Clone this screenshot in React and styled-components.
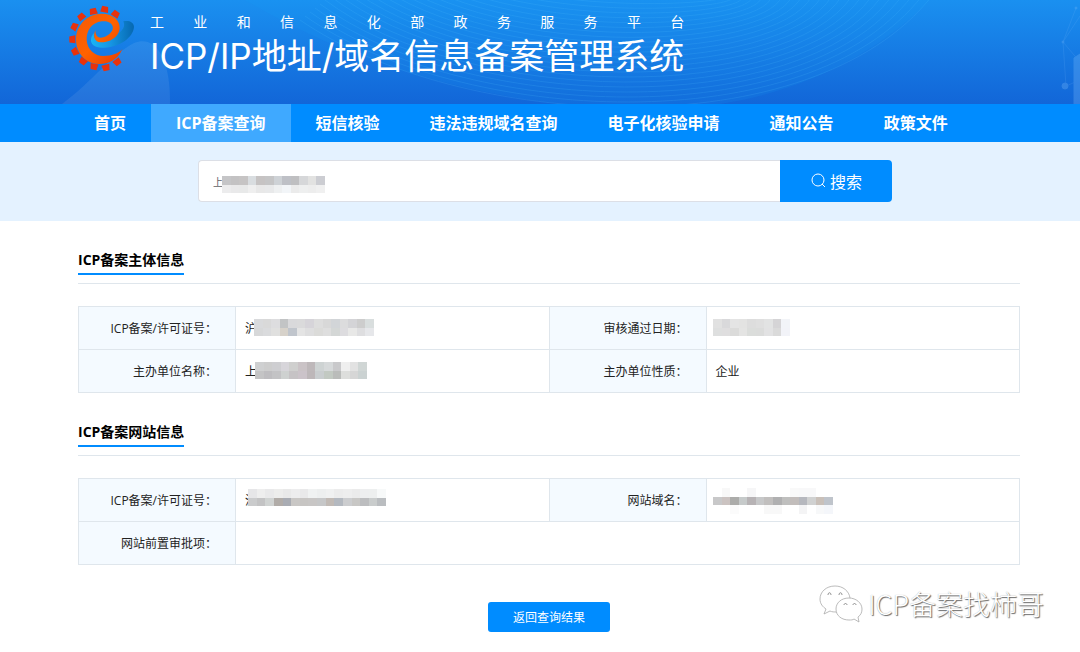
import React, { useState } from "react"
import styled, { createGlobalStyle } from "styled-components"

const GlobalStyle = createGlobalStyle`
    * {
        box-sizing: border-box;
    }

    body {
        margin: 0;
        background-color: #fff;
        color: #222;
        font-family: "Open Sans", "Noto Sans CJK SC", sans-serif;
        font-size: 12px;
    }

    button, input {
        font-family: inherit;
    }
`
const Page = styled.div`
    position: relative;
    padding-bottom: 20px;
`
const Header = styled.header`
    position: relative;
    display: flex;
    height: 104px;
    padding: 4px 68px;
    gap: 14px;
    overflow: hidden;
    color: #fff;
    background-image: linear-gradient(#1a90f0, #1266d8);
`
const HeaderArt = styled.svg`
    position: absolute;
    top: 0;
    right: 0;
    width: 1080px;
    height: 104px;
`
const LogoIcon = styled.svg`
    position: relative;
    flex: none;
    width: 68px;
    height: 68px;
`
const Brand = styled.div`
    position: relative;
    padding-top: 8px;
`
const Platform = styled.div`
    display: flex;
    justify-content: space-between;
    font-size: 14px;
    line-height: 20px;
`
const SystemName = styled.h1`
    margin: 0;
    font-family: Inter, "Noto Sans CJK SC", sans-serif;
    font-size: 35px;
    font-weight: 400;
    line-height: 48px;
    white-space: nowrap;
`
const Nav = styled.nav`
    display: flex;
    height: 38px;
    padding-left: 69px;
    background-color: #008cff;
`
const NavLink = styled.a`
    padding: 0 25px;
    color: #fff;
    font-size: 16px;
    font-weight: 700;
    line-height: 38px;
    white-space: nowrap;
    text-decoration: none;
    background-color: ${props => (props.$active ? "#3fa9ff" : "transparent")};
`
const SearchBar = styled.form`
    display: flex;
    padding: 18px 188px 19px 198px;
    background-color: #e4f2ff;
`
const SearchField = styled.div`
    position: relative;
    flex: 1;
`
const SearchInput = styled.input`
    width: 100%;
    height: 42px;
    padding: 0 14px;
    border: 1px solid #dcdfe6;
    border-right: none;
    border-radius: 4px 0 0 4px;
    color: #606266;
    font-size: 10px;
    outline: none;
`
const SearchButton = styled.button`
    display: flex;
    align-items: center;
    justify-content: center;
    gap: 4px;
    width: 112px;
    height: 42px;
    border: none;
    border-radius: 0 4px 4px 0;
    color: #fff;
    font-size: 16px;
    background-color: #008cff;
`
const Main = styled.main`
    display: flex;
    flex-direction: column;
    padding: 28px 60px 0 78px;
`
const Section = styled.section`
    margin-bottom: 28px;
`
const SectionHead = styled.div`
    display: flex;
    padding-bottom: 8px;
    margin-bottom: 22px;
    border-bottom: 1px solid #dfe6ec;
`
const SectionTitle = styled.h2`
    margin: 0;
    padding-bottom: 2px;
    border-bottom: 2px solid #008cff;
    color: #000;
    font-size: 14px;
    font-weight: 700;
    line-height: 22px;
`
const InfoTable = styled.table`
    width: 100%;
    table-layout: fixed;
    border-collapse: collapse;
`
const Label = styled.th`
    width: 157px;
    height: 43px;
    padding: 0 18px 0 0;
    border: 1px solid #dfe6ec;
    font-weight: 400;
    text-align: right;
    background-color: #f4faff;
`
const Value = styled.td`
    position: relative;
    padding: 0 9px;
    border: 1px solid #dfe6ec;
`
const Mask = styled.svg`
    position: absolute;
    top: ${props => props.$top}px;
    left: ${props => props.$left}px;
`
const BackButton = styled.button`
    align-self: center;
    width: 122px;
    height: 30px;
    margin-top: 9px;
    border: none;
    border-radius: 3px;
    color: #fff;
    font-size: 12px;
    background-color: #008cff;
`
const Watermark = styled.div`
    position: absolute;
    right: 36px;
    bottom: 28px;
    display: flex;
    align-items: center;
    gap: 5px;
    color: #fff;
    font-family: "Noto Sans CJK SC", sans-serif;
    font-size: 27px;
    font-weight: 300;
    line-height: 40px;
    text-shadow: 1px 1px 1px #666, 0 0 1px #aaa;
`

const platform = "工业和信息化部政务服务平台"

const links = ["首页", "ICP备案查询", "短信核验", "违法违规域名查询", "电子化核验申请", "通知公告", "政策文件"]

const masks = {
    search: [
        ["#c5c5c7", "#c3c2c3", "#c6c4c4", "#d9dde0", "#c6c3c3", "#c5c5c6", "#ced2d6", "#bec0c6", "#bfbfc1", "#d6d7d9", "#e2e2e1", "#cccdd2"],
        ["#ececed", "#e9e9ea", "#e8e9e9", "#efefef", "#e8e8e8", "#e8e9ea", "#eef0f1", "#f2f5f8", "#ebebeb", "#eeefef", "#ededed", "#f0f0f0"]
    ],
    license: [
        ["#d9dadc", "#d9d9d9", "#dddddf", "#c2c4c5", "#d9d9db", "#dadadb", "#d6d4d9", "#dddddd", "#d8d8d8", "#d2d5d8", "#dcdcdd", "#d4d4d7", "#cdcdcd", "#d9dede"],
        ["#d7d8d9", "#dadbdd", "#e0e0df", "#d7d2ca", "#c0c5cc", "#e4e4e4", "#dededf", "#dbdbd9", "#dedede", "#d4d7d6", "#dddcdf", "#e8e8e7", "#dedee0", "#e6e7ea"]
    ],
    owner: [
        ["#cfd0d1", "#cdcdcd", "#ceced1", "#d7d5da", "#cfcfce", "#cac3c6", "#beb8ba", "#ced3d3", "#d6d9da", "#c9c9cb", "#efefef", "#e2e2e2", "#d0d6d5"],
        ["#c4c4c5", "#bebdc0", "#c3c3c5", "#ced1d0", "#c6c3c5", "#cbc3c9", "#bdb7b9", "#c9cdcf", "#c2c9c2", "#babcba", "#dddedc", "#d6d6d6", "#cbd2d2"]
    ],
    date: [
        ["#e1e1e1", "#d9d9db", "#e4e4e4", "#e3e3e2", "#dddddd", "#dfdfdf", "#e2e3e3", "#d5d4d6", "#f2f4f8"],
        ["#dedfdf", "#dfdedf", "#dbdbda", "#e4e4e3", "#dbdddb", "#dbdcdb", "#e2e2e3", "#dadada", "#f2f3f8"]
    ],
    site: [
        ["#e6e6e8", "#eeeeee", "#e9e9ea", "#ededec", "#e9e9e9", "#ededee", "#e9e9ea", "#f0f2f2", "#edefef", "#f0f1f1", "#ececec", "#eeeeee", "#ebebeb", "#edeeef", "#edefef", "#f7f9f9"],
        ["#cacbcc", "#c3c3c4", "#d0d3d2", "#b1aca8", "#a9acb3", "#c9c7c5", "#c7c5c3", "#c8c6c5", "#c6c7c8", "#c1bab5", "#b4b9c0", "#cccdcf", "#c8c7c5", "#bcbdbf", "#c9cccc", "#babdc0"]
    ],
    domain: [
        ["#fff", "#f8f8f8", "#fff", "#fff", "#f6f6f7", "#fff", "#fff", "#fff", "#fff", "#f9f9f9", "#f8f8f9", "#f8f8f9", "#fff", "#fff"],
        ["#c8c8c9", "#cbc3c1", "#acacaa", "#c6caca", "#b7b3b5", "#c7c8c9", "#c1bfbe", "#b0b0b1", "#bfbfbe", "#c2bdbb", "#b6b8be", "#d0d1d1", "#c9c0b9", "#bfc4cb"],
        ["#fff", "#fff", "#fbfbfb", "#fff", "#fff", "#fff", "#f8f8f8", "#f8f8f8", "#fff", "#fff", "#f4f4f5", "#fff", "#f7f8f9", "#f4f6fa"]
    ]
}

const teeth = [[167, 42], [134, 28], [100, 34], [64, 50], [43, 80], [37, 118], [45, 155], [69, 184], [102, 200], [138, 203], [172, 186]]

const toothAngle = ([x, y]) => (Math.atan2(y - 116, x - 118) * 180) / Math.PI + 90

const Logo = () => (
    <LogoIcon viewBox="24 12 204 204" aria-hidden="true">
        <defs>
            <linearGradient id="swoosh" x1="0" x2="1">
                <stop offset="0" stopColor="#19b4f5" />
                <stop offset="0.45" stopColor="#1696e4" />
                <stop offset="1" stopColor="#0668b0" />
            </linearGradient>
            <linearGradient id="flame" x1="0" y1="0" x2="1" y2="1">
                <stop offset="0" stopColor="#f45a05" />
                <stop offset="0.5" stopColor="#ff6200" />
                <stop offset="1" stopColor="#e93c00" />
            </linearGradient>
        </defs>
        {teeth.map((tooth, index) => (
            <path
                key={index}
                d="M-9 -9 H9 L12 9 H-12 Z"
                fill="#e8320c"
                transform={`translate(${tooth[0]} ${tooth[1]}) rotate(${toothAngle(tooth)})`}
            />
        ))}
        <path fill="url(#swoosh)" d="M102 100 C98 122 120 130 145 118 C180 102 200 84 190 64 C206 60 221 66 222 80 C220 112 180 140 135 143 C106 146 91 134 93 118 C94 110 98 104 102 100 Z" />
        <path fill="url(#flame)" d="M187 148 C172 182 142 193 115 192 C72 190 47 155 48 115 C50 74 82 42 125 41 C160 41 181 62 179 86 C176 112 148 127 122 127 C104 126 98 110 106 90 C106 108 114 116 130 112 C150 106 161 92 158 79 C154 66 140 62 125 64 C95 68 79 92 80 120 C82 150 105 168 130 168 C155 168 172 162 187 148 Z" />
    </LogoIcon>
)

const Waves = () => (
    <HeaderArt viewBox="0 0 1080 104" aria-hidden="true">
        <path d="M62 104 C92 82 112 54 134 43 C155 34 171 58 170 104 Z" fill="#fff" opacity="0.08" />
        <path d="M245 0 C330 50 430 88 560 104 H720 C810 90 880 50 930 0 Z" fill="#18a0f5" opacity="0.13" />
        <g fill="none" stroke="#4fc0ff" opacity="0.17">
            {Array.from({ length: 24 }, (_, i) => (
                <path key={i} d={`M${300 + i * 5} ${20 - i * 4} C${460 + i} ${130 - i * 5} ${810 - i * 3} ${150 - i * 7} ${932 - i * 10} -4`} />
            ))}
        </g>
        <g stroke="#8fc8ff" fill="#8fc8ff" opacity="0.25">
            <path d="M1076 8 L1063 42 L1080 62 M1063 42 L1066 86 L1080 80 M1063 42 L1080 16" fill="none" opacity="0.5" />
            <circle cx="1076" cy="8" r="1" />
            <circle cx="1063" cy="42" r="1" />
            <circle cx="1065" cy="86" r="3" />
            <path d="M1074 104 V58 L1080 54 V104 Z" />
        </g>
    </HeaderArt>
)

const SearchIcon = () => (
    <svg width="16" height="16" viewBox="0 0 16 16" fill="none" stroke="#fff" aria-hidden="true">
        <circle cx="8" cy="7" r="6" />
        <path d="M12 11 L15 14" />
    </svg>
)

const Mosaic = ({ rows, top, left }) => (
    <Mask
        $top={top}
        $left={left}
        width={Math.round(rows[0].length * 8.6)}
        height={Math.round(rows.length * 8.6)}
        viewBox={`0 0 ${rows[0].length} ${rows.length}`}
        preserveAspectRatio="none"
        shapeRendering="crispEdges"
        aria-hidden="true"
    >
        {rows.map((row, y) => row.map((color, x) => (
            <rect key={`${x}-${y}`} x={x} y={y} width="1" height="1" fill={color} />
        )))}
    </Mask>
)

const WechatIcon = () => (
    <svg width="44" height="38" viewBox="0 0 44 38" fill="#fff" stroke="#aaa" strokeWidth="0.8" aria-hidden="true">
        <path d="M16 1 C7 1 1 7 1 14 C1 19 4 22 7 24 L5 29 L11 26 C13 27 15 27 18 27 L31 13 C30 6 24 1 16 1 Z" />
        <path d="M30 13 C22 13 17 18 17 24 C17 31 23 35 30 35 C32 35 34 35 35 34 L40 37 L39 32 C42 30 43 27 43 24 C43 18 37 13 30 13 Z" />
        <path d="M9 10 C9 7 12 7 12 10 M20 10 C20 7 23 7 23 10 M25 20 C25 18 28 18 28 20 M34 20 C34 18 37 18 37 20" fill="none" stroke="#777" />
    </svg>
)

export default function App() {
    const [keyword, setKeyword] = useState("上")

    return (
        <Page>
            <GlobalStyle />
            <Header>
                <Waves />
                <Logo />
                <Brand>
                    <Platform>
                        {platform.split("").map((char, index) => <span key={index}>{char}</span>)}
                    </Platform>
                    <SystemName>ICP/IP地址/域名信息备案管理系统</SystemName>
                </Brand>
            </Header>
            <Nav>
                {links.map(link => (
                    <NavLink key={link} href="#" $active={link === "ICP备案查询"}>{link}</NavLink>
                ))}
            </Nav>
            <SearchBar onSubmit={event => event.preventDefault()}>
                <SearchField>
                    <SearchInput aria-label="搜索" value={keyword} onChange={event => setKeyword(event.target.value)} />
                    <Mosaic rows={masks.search} top={16} left={24} />
                </SearchField>
                <SearchButton type="submit"><SearchIcon />搜索</SearchButton>
            </SearchBar>
            <Main>
                <Section>
                    <SectionHead><SectionTitle>ICP备案主体信息</SectionTitle></SectionHead>
                    <InfoTable>
                        <tbody>
                            <tr>
                                <Label scope="row">ICP备案/许可证号：</Label>
                                <Value>沪<Mosaic rows={masks.license} top={12} left={18} /></Value>
                                <Label scope="row">审核通过日期：</Label>
                                <Value><Mosaic rows={masks.date} top={12} left={6} /></Value>
                            </tr>
                            <tr>
                                <Label scope="row">主办单位名称：</Label>
                                <Value>上<Mosaic rows={masks.owner} top={12} left={19} /></Value>
                                <Label scope="row">主办单位性质：</Label>
                                <Value>企业</Value>
                            </tr>
                        </tbody>
                    </InfoTable>
                </Section>
                <Section>
                    <SectionHead><SectionTitle>ICP备案网站信息</SectionTitle></SectionHead>
                    <InfoTable>
                        <tbody>
                            <tr>
                                <Label scope="row">ICP备案/许可证号：</Label>
                                <Value>沪<Mosaic rows={masks.site} top={10} left={12} /></Value>
                                <Label scope="row">网站域名：</Label>
                                <Value><Mosaic rows={masks.domain} top={9} left={6} /></Value>
                            </tr>
                            <tr>
                                <Label scope="row">网站前置审批项：</Label>
                                <Value colSpan="3" />
                            </tr>
                        </tbody>
                    </InfoTable>
                </Section>
                <BackButton type="button">返回查询结果</BackButton>
            </Main>
            <Watermark><WechatIcon />ICP备案找柿哥</Watermark>
        </Page>
    )
}
